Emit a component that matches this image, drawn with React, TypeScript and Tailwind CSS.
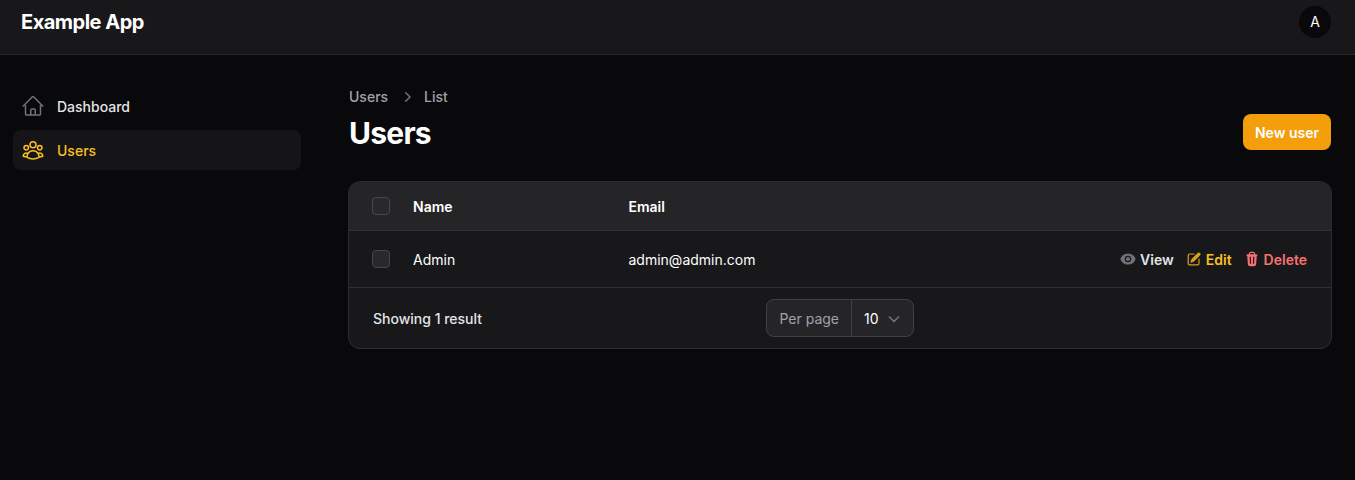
import React from "react";
import { HiOutlineHome, HiOutlineUserGroup } from "react-icons/hi2";
import { HiMiniEye, HiMiniPencilSquare, HiMiniTrash, HiMiniChevronRight } from "react-icons/hi2";

function Check() {
  return <span className="block w-[18px] h-[18px] rounded-[4px] bg-[#29292c] border border-[#47474b]" />;
}

export default function App() {
  return (
    <div className="min-h-[480px] bg-[#09090b] font-['Inter',sans-serif] text-white overflow-hidden">
      <header className="h-[55px] bg-[#18181b] border-b border-[#27272a] pl-[21px] pr-6">
        <div className="h-11 flex items-center justify-between">
          <span className="text-xl leading-5 font-bold tracking-tight">Example App</span>
          <span className="w-8 h-8 rounded-full bg-[#09090b] flex items-center justify-center text-sm">A</span>
        </div>
      </header>
      <div className="flex">
        <aside className="w-[349px] shrink-0 pl-[13px] pr-12 pt-[31px] flex flex-col gap-1">
          <a className="h-10 flex items-center gap-3 px-2 rounded-lg text-sm font-medium text-[#e4e4e7]">
            <HiOutlineHome className="w-6 h-6 text-[#71717a]" />
            <span className="pt-[2px]">Dashboard</span>
          </a>
          <a className="h-10 flex items-center gap-3 px-2 rounded-lg bg-[#151518] text-sm font-medium text-[#fbbf24]">
            <HiOutlineUserGroup className="w-6 h-6 text-[#fbbf24]" />
            <span className="pt-[2px]">Users</span>
          </a>
        </aside>
        <main className="flex-1 pr-6 pt-8">
          <div className="flex items-end justify-between">
            <div>
              <nav className="flex items-center text-sm font-medium text-[#a1a1aa] h-5">
                <span>Users</span>
                <HiMiniChevronRight className="w-5 h-5 ml-[9px] mr-[7px] text-[#71717a]" />
                <span>List</span>
              </nav>
              <h1 className="mt-2 text-3xl leading-9 font-bold tracking-tight">Users</h1>
            </div>
            <button className="w-[88px] h-9 mb-px pt-[2px] rounded-lg bg-[#f59e0b] text-sm font-semibold text-white">New user</button>
          </div>
          <div className="mt-[30px] -mx-px rounded-xl bg-[#18181b] border border-[#2c2c2f] overflow-hidden">
            <div className="h-[49px] bg-[#252528] border-b border-[#303033] flex items-center text-sm font-semibold pl-[23px]">
              <Check />
              <span className="ml-[23px] w-[215.5px] pt-[2px]">Name</span>
              <span className="pt-[2px]">Email</span>
            </div>
            <div className="h-[57px] border-b border-[#303033] flex items-center text-sm pl-[23px] pr-6">
              <Check />
              <span className="ml-[23px] w-[215.5px] pt-[2px]">Admin</span>
              <span className="flex-1 pt-[2px]">admin@admin.com</span>
              <div className="flex items-center gap-3 font-semibold">
                <span className="flex items-center gap-1 text-[#e4e4e7]">
                  <HiMiniEye className="w-4 h-4 text-[#71717a]" />
                  <span className="pt-[2px]">View</span>
                </span>
                <span className="flex items-center gap-1 text-[#fbbf24]">
                  <HiMiniPencilSquare className="w-4 h-4 text-[#d9a01e]" />
                  <span className="pt-[2px]">Edit</span>
                </span>
                <span className="flex items-center gap-1 text-[#f87171]">
                  <HiMiniTrash className="w-4 h-4" />
                  <span className="pt-[2px]">Delete</span>
                </span>
              </div>
            </div>
            <div className="h-[60px] grid grid-cols-[1fr_auto_1fr] items-center pl-6 pr-6 text-sm">
              <span className="font-medium text-[#e4e4e7] pt-[2px]">Showing 1 result</span>
              <div className="h-[38px] flex rounded-lg bg-[#252528] border border-[#414145]">
                <span className="flex items-center px-3 pt-[2px] text-[#a1a1aa] border-r border-[#414145]">Per page</span>
                <span className="flex items-center pl-3 pr-[9px] gap-[5px]">
                  <span className="pt-[2px]">10</span>
                  <svg viewBox="0 0 20 20" fill="none" className="w-5 h-5 mt-[2px]">
                    <path d="M5.5 8l4.5 4.5 4.5-4.5" stroke="#71717a" strokeWidth="1.7" strokeLinecap="round" strokeLinejoin="round" />
                  </svg>
                </span>
              </div>
              <span />
            </div>
          </div>
        </main>
      </div>
    </div>
  );
}
